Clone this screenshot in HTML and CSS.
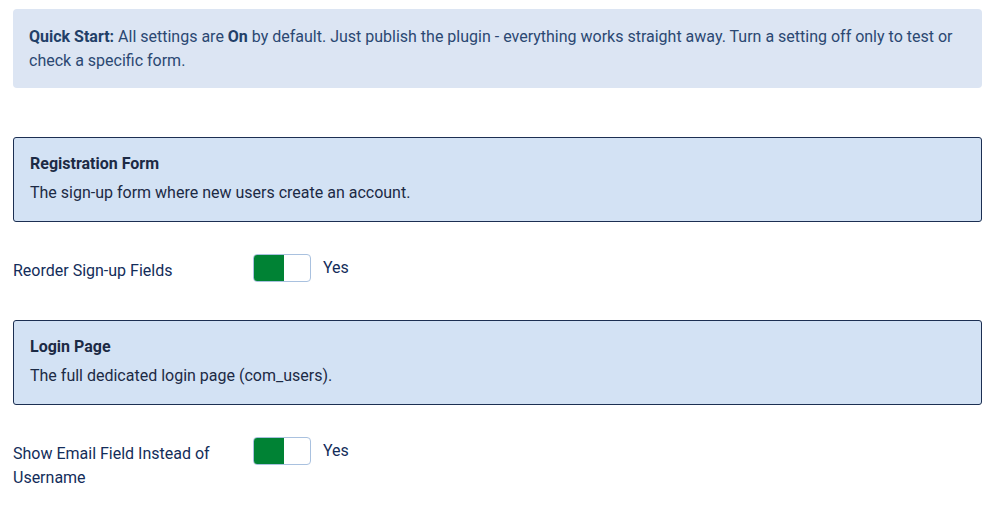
FILE: index.html
```html
<!DOCTYPE html>
<html lang="en">
<head>
<meta charset="utf-8">
<title>Plugin settings</title>
<link rel="stylesheet" href="styles.css">
</head>
<body>
<div class="page">
  <div class="alert">
    <strong>Quick Start:</strong> All settings are <strong>On</strong> by default. Just publish the plugin - everything works straight away. Turn a setting off only to test or check a specific form.
  </div>

  <div class="section">
    <div class="section-title">Registration Form</div>
    <div class="section-desc">The sign-up form where new users create an account.</div>
  </div>

  <div class="row">
    <div class="label">Reorder Sign-up Fields</div>
    <div class="control">
      <span class="switch"><span class="knob"></span></span>
      <span class="state">Yes</span>
    </div>
  </div>

  <div class="section">
    <div class="section-title">Login Page</div>
    <div class="section-desc">The full dedicated login page (com_users).</div>
  </div>

  <div class="row">
    <div class="label">Show Email Field Instead of Username</div>
    <div class="control">
      <span class="switch"><span class="knob"></span></span>
      <span class="state">Yes</span>
    </div>
  </div>
</div>
</body>
</html>
```
FILE: styles.css
```css
html, body {
  margin: 0;
  padding: 0;
  background: #ffffff;
}
body {
  font-family: Roboto, "Noto Sans", "Liberation Sans", sans-serif;
  font-size: 16px;
  line-height: 24px;
  color: #132d5a;
}
.page {
  padding: 9px 12px 0 13px;
}
.alert {
  background: #dce5f3;
  color: #2b4872;
  border-radius: 4px;
  padding: 16px 16px 15px;
  margin-bottom: 49px;
}
.alert strong {
  font-weight: 700;
  color: #223f68;
}
.section {
  background: #d3e2f4;
  border: 1px solid #1c2f52;
  border-radius: 3px;
  padding: 14px 16px 16px;
  color: #1c2a45;
  margin-bottom: 32px;
}
.section-title {
  font-weight: 700;
  font-size: 16px;
  line-height: 24px;
  margin-bottom: 5px;
}
.section-desc {
  font-size: 16px;
  line-height: 24px;
}
.row {
  display: flex;
  align-items: flex-start;
  margin-bottom: 37px;
}
.label {
  width: 220px;
  margin-right: 20px;
  padding-top: 5px;
}
.control {
  display: flex;
  align-items: center;
  gap: 12px;
}
.switch {
  display: block;
  box-sizing: border-box;
  width: 58px;
  height: 28px;
  border: 1px solid #a9c1df;
  border-radius: 4px;
  background: #ffffff;
  overflow: hidden;
}
.knob {
  display: block;
  width: 30px;
  height: 100%;
  background: #008234;
}
.state {
  line-height: 24px;
}
```
